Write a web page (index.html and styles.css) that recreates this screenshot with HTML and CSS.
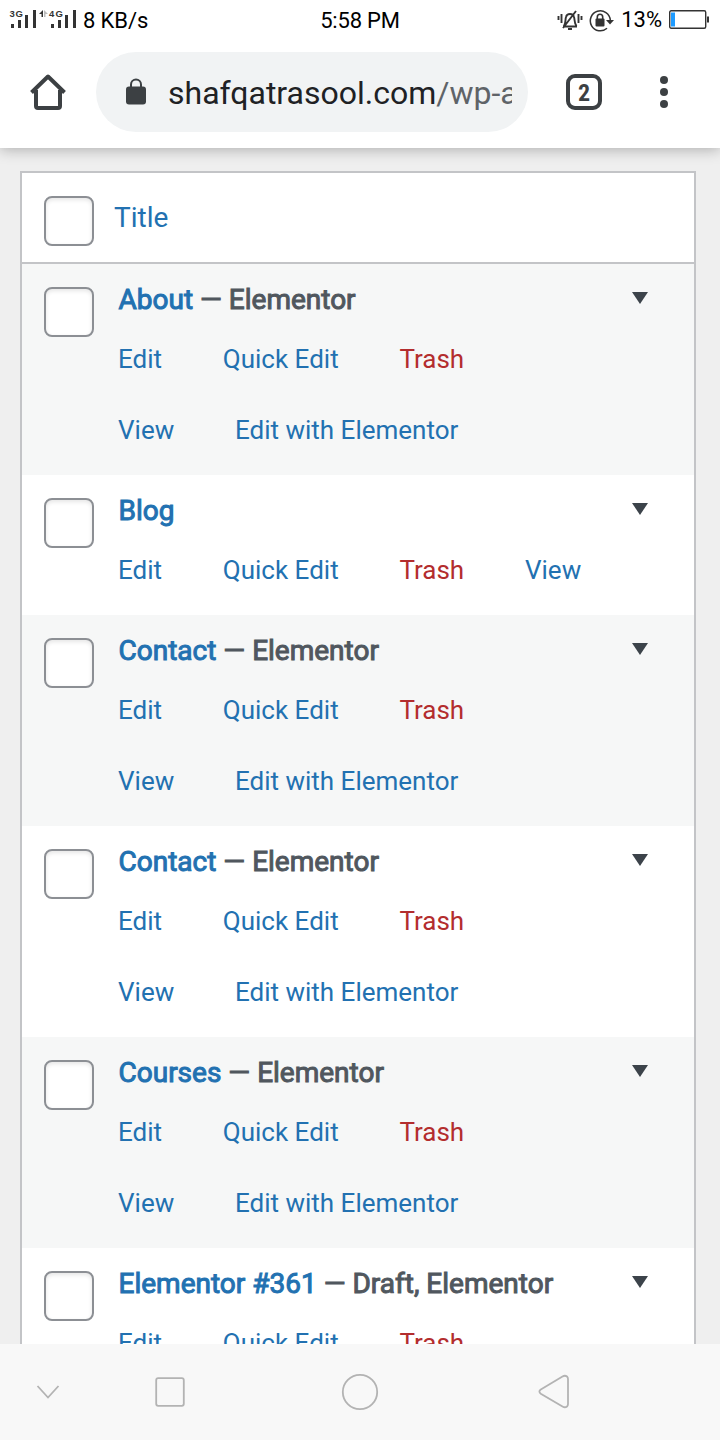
FILE: index.html
```html
<!DOCTYPE html>
<html lang="en">
<head>
<meta charset="utf-8">
<title>Pages</title>
<link rel="stylesheet" href="styles.css">
</head>
<body>
<div class="screen">
  <header class="status">
    <div class="status-left">
      <svg class="signals" width="68" height="22" viewBox="0 0 68 22">
        <g fill="#333"><path d="M1 15h3v4H1zM8 11h3v8H8zM15 6h3v13h-3zM23 1h3v18h-3zM41 15h3v4h-3zM48 11h3v8h-3zM55 6h3v13h-3zM63 1h3v18h-3z"/><path d="M29 5l4-4v7h-1.500V5z"/></g>
        <path d="M34 1v7h1.500V5H38z" fill="#bbb"/>
        <g class="net"><text x="-.5" y="8" textLength="13.500">3G</text><text x="39" y="8" textLength="14">4G</text></g>
      </svg>
      <span class="speed">8 KB/s</span>
    </div>
    <div class="clock">5:58 PM</div>
    <div class="status-right">
      <svg class="bell" width="26" height="22" viewBox="0 0 26 22" fill="none" stroke="#333" stroke-width="1.900">
        <path d="M1.500 6v4M4.500 4v9M21.500 4v9M24.500 6v4M6 16.500h14M7 16c2-3 1-6 2-9 1-4 7-4 8 0 1 3 0 6 2.500 9M11 19h4M6 18L19 1"/>
      </svg>
      <svg class="rotate" width="26" height="24" viewBox="0 0 26 24">
        <path d="M18 19.300A10 10 0 1 1 21.300 11" fill="none" stroke="#333" stroke-width="1.500"/>
        <path d="M17 11h8L21 15.500z" fill="#333"/>
        <rect x="6.500" y="9.500" width="9" height="8" rx="1" fill="#333"/>
        <path d="M8.300 10V8a2.700 2.700 0 0 1 5.400 0v2" fill="none" stroke="#333" stroke-width="1.600"/>
      </svg>
      <span class="percent">13%</span>
      <svg class="battery" width="42" height="20" viewBox="0 0 42 20">
        <rect x=".7" y=".7" width="36" height="17.500" rx="1.500" fill="#fff" stroke="#333" stroke-width="1.400"/>
        <path d="M2 2.500h4v14H2z" fill="#1e9bff"/><path d="M38 6.500h2v6h-2z" fill="#333"/>
      </svg>
    </div>
  </header>
  <nav class="toolbar">
    <svg class="home" width="40" height="40" viewBox="0 0 40 40" fill="none" stroke="#3c4043" stroke-width="4">
      <path d="M8 18v16q0 2 2 2h20q2 0 2-2V18"/><path d="M3.500 20.500L20 4.500l16.500 16" stroke-linejoin="round"/>
    </svg>
    <div class="address">
      <svg class="lock" width="20" height="27" viewBox="0 0 20 27"><rect y="8.500" width="20" height="18" rx="3" fill="#3c4043"/><path d="M5 9V6.500a5 5 0 0 1 10 0V9" fill="none" stroke="#3c4043" stroke-width="2"/></svg>
      <div class="url">shafqatrasool.com<span class="path">/wp-a</span></div>
    </div>
    <div class="tabs">2</div>
    <svg class="more" width="8" height="32" viewBox="0 0 8 32" fill="#3c4043"><circle cx="4" cy="4" r="4"/><circle cx="4" cy="16" r="4"/><circle cx="4" cy="28" r="4"/></svg>
  </nav>
  <main class="page">
    <div class="table">
      <div class="head"><span class="check"></span><a class="sort">Title</a></div>

      <div class="row"><span class="check"></span><div class="cell">
        <div class="title"><span><a>About</a> — Elementor</span><i class="toggle"></i></div>
        <div class="actions"><a>Edit</a><a>Quick Edit</a><a class="trash">Trash</a></div>
        <div class="actions"><a>View</a><a>Edit with Elementor</a></div>
      </div></div>

      <div class="row"><span class="check"></span><div class="cell">
        <div class="title"><span><a>Blog</a></span><i class="toggle"></i></div>
        <div class="actions"><a>Edit</a><a>Quick Edit</a><a class="trash">Trash</a><a>View</a></div>
      </div></div>

      <div class="row"><span class="check"></span><div class="cell">
        <div class="title"><span><a>Contact</a> — Elementor</span><i class="toggle"></i></div>
        <div class="actions"><a>Edit</a><a>Quick Edit</a><a class="trash">Trash</a></div>
        <div class="actions"><a>View</a><a>Edit with Elementor</a></div>
      </div></div>

      <div class="row"><span class="check"></span><div class="cell">
        <div class="title"><span><a>Contact</a> — Elementor</span><i class="toggle"></i></div>
        <div class="actions"><a>Edit</a><a>Quick Edit</a><a class="trash">Trash</a></div>
        <div class="actions"><a>View</a><a>Edit with Elementor</a></div>
      </div></div>

      <div class="row"><span class="check"></span><div class="cell">
        <div class="title"><span><a>Courses</a> — Elementor</span><i class="toggle"></i></div>
        <div class="actions"><a>Edit</a><a>Quick Edit</a><a class="trash">Trash</a></div>
        <div class="actions"><a>View</a><a>Edit with Elementor</a></div>
      </div></div>

      <div class="row"><span class="check"></span><div class="cell">
        <div class="title"><span><a>Elementor #361</a> — Draft, Elementor</span><i class="toggle"></i></div>
        <div class="actions"><a>Edit</a><a>Quick Edit</a><a class="trash">Trash</a></div>
      </div></div>
    </div>
  </main>
  <footer class="navbar">
    <svg width="720" height="96" viewBox="0 0 720 96" fill="none" stroke="#b3b3b3" stroke-width="1.800">
      <path d="M37.500 42L48 53.500 58.500 42"/>
      <rect x="156.200" y="34.200" width="27.600" height="27.600" rx="2"/>
      <circle cx="360" cy="48" r="17.200"/>
      <path d="M540.800 45.500L562.500 32.500Q565 31 567 32.500Q568 33.500 568 35V60Q568 61.500 567 62.500Q565 64 562.500 62.500L540.800 49.700Q538 47.500 540.800 45.500z"/>
    </svg>
  </footer>
</div>
</body>
</html>
```
FILE: styles.css
```css
* { box-sizing: border-box; }
body { margin: 0; font-family: Roboto, sans-serif; background: #fff; }
.screen { width: 720px; height: 1440px; display: flex; flex-direction: column; overflow: hidden; }
svg { display: block; flex: none; }

.status { height: 36px; flex: none; display: grid; grid-template-columns: 1fr auto 1fr; align-items: center; color: #000; font-size: 22px; line-height: 36px; }
.status-left, .status-right { display: flex; align-items: center; }
.status-left { padding-left: 10px; }
.signals { overflow: visible; margin-top: 1px; }
.net { font: bold 9.500px "Liberation Sans", sans-serif; fill: #333; }
.speed { margin-left: 5px; padding-top: 2px; letter-spacing: -.1px; }
.clock { padding-top: 3px; letter-spacing: -.2px; }
.status-right { justify-content: flex-end; padding-right: 9px; }
.bell { margin-top: 2px; }
.rotate { margin: 2px 6px 0 6px; }
.percent { margin-right: 7px; padding-top: 1px; }

.toolbar { height: 112px; flex: none; display: flex; align-items: center; padding: 0 52px 0 28px; background: #fff; position: relative; box-shadow: 0 1px 14px rgba(0,0,0,.3); clip-path: inset(0 0 -24px 0); }
.address { width: 432px; height: 80px; margin-left: 28px; padding: 0 16px 0 30px; border-radius: 40px; background: #f1f3f4; display: flex; align-items: center; }
.lock { margin-top: -2px; }
.url { margin-left: 22px; padding-top: 2px; width: 344px; overflow: hidden; white-space: nowrap; font-size: 32px; line-height: 48px; color: #202124; }
.path { color: #5f6368; }
.tabs { width: 36px; height: 36px; margin-left: 38px; border: 4px solid #3c4043; border-radius: 9px; font: bold 24px/30px "Roboto Condensed", Roboto, sans-serif; text-align: center; color: #3c4043; }
.more { margin-left: auto; }

.page { flex: 1; min-height: 0; overflow: hidden; background: #efefef; padding: 23px 24px 0 20px; }
.table { border: 2px solid #c3c4c7; background: #fff; }
.head { height: 91px; padding: 23px 0 0 22px; border-bottom: 2px solid #c3c4c7; display: flex; }
.check { width: 50px; height: 50px; flex: none; border: 2px solid #8c8f94; border-radius: 8px; background: #fff; box-shadow: inset 0 2px 4px rgba(0,0,0,.1); }
.sort { margin-left: 20px; font-size: 28px; line-height: 44px; color: #2271b1; }
.row { display: flex; align-items: flex-start; padding: 0 0 9px 22px; }
.row .check { margin-top: 23px; }
.row:nth-child(even) { background: #f6f7f7; }
.cell { flex: 1; margin-left: 24px; padding-top: 16px; }
.title { height: 44px; padding: 0 46px 0 .5px; display: flex; justify-content: space-between; font-size: 28px; line-height: 40px; color: #50575e; -webkit-text-stroke: 1px currentColor; }
.title a { color: #2271b1; -webkit-text-stroke-color: #2271b1; }
.toggle { width: 16px; height: 12px; margin-top: 12px; background: #3c434a; clip-path: polygon(0 0, 100% 0, 50% 100%); }
.actions { height: 71px; display: flex; gap: 60.800px; font-size: 26px; line-height: 71px; color: #2271b1; }
.actions .trash { color: #b32d2e; }

.navbar { height: 96px; flex: none; background: #f8f8f8; }
```
